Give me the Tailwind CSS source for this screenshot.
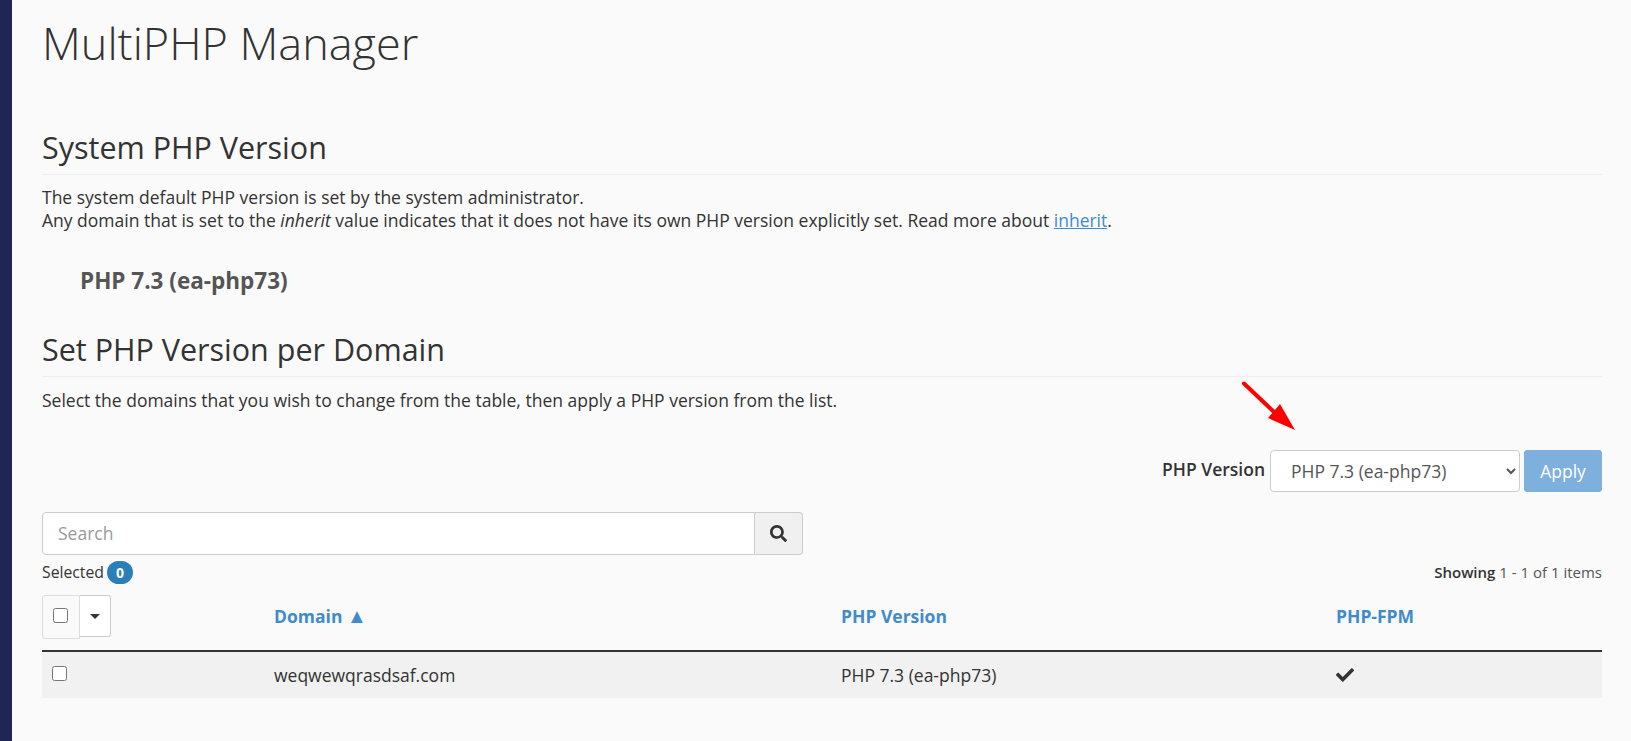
<!DOCTYPE html>
<html lang="en">
<head>
    <meta charset="UTF-8">
    <meta name="viewport" content="width=device-width, initial-scale=1.0">
    <title>MultiPHP Manager</title>
    <script src="https://cdn.jsdelivr.net/npm/@tailwindcss/browser@4"></script>
</head>
<body class="h-screen overflow-hidden bg-[#fafafa] text-[#333] font-['Open_Sans',sans-serif]">
    <div class="relative flex h-full">
        <!-- Sidebar strip -->
        <div class="w-[12px] h-full bg-[#1f2555]"></div>

        <main class="flex-1 pl-[30px] pr-[29px]">
            <h1 class="mt-[18px] text-[45px] leading-[50px] font-light">MultiPHP Manager</h1>

            <!-- System version -->
            <h2 class="mt-[62px] pb-[10px] text-[30.5px] leading-[34px] border-b border-[#eeeeee]">System PHP Version</h2>
            <p class="mt-[11px] text-[17.5px] leading-[22.5px]">
                The system default PHP version is set by the system administrator.<br>
                Any domain that is set to the <em>inherit</em> value indicates that it does not have its own PHP version explicitly set. Read more about <a href="#" class="text-[#428bca] underline">inherit</a>.
            </p>
            <div class="mt-[36px] pl-[38px] text-[22.5px] leading-[28px] font-bold text-[#555]">PHP 7.3 (ea-php73)</div>

            <!-- Per domain -->
            <h2 class="mt-[37px] pb-[10px] text-[30.5px] leading-[34px] border-b border-[#eeeeee]">Set PHP Version per Domain</h2>
            <p class="mt-[12px] text-[17.5px] leading-[22px]">Select the domains that you wish to change from the table, then apply a PHP version from the list.</p>

            <div class="mt-[39px] flex justify-end items-center h-[42px]">
                <label class="mr-[5px] -mt-[4px] text-[17.5px] font-semibold">PHP Version</label>
                <select class="w-[250px] h-[42px] pl-[16px] pr-[4px] bg-white border border-[#cccccc] rounded text-[17.5px] text-[#555]">
                    <option>PHP 7.3 (ea-php73)</option>
                </select>
                <button class="ml-[4px] w-[78px] h-[42px] bg-[#7eb0de] border border-[#7eb0de] rounded-[3px] text-[17.5px] text-white">Apply</button>
            </div>

            <!-- Search -->
            <div class="mt-[20px] flex w-[761px] h-[43px]">
                <input type="text" placeholder="Search" class="flex-1 min-w-0 px-[15px] bg-white border border-[#cccccc] rounded-l text-[17.5px] placeholder:text-[#999]">
                <button class="w-[48px] flex items-center justify-center bg-[#f0f0f0] border border-l-0 border-[#cccccc] rounded-r">
                    <svg viewBox="0 0 512 512" class="w-[17px] h-[17px]" fill="#333"><path d="M505 442.7L405.3 343c-4.5-4.5-10.6-7-17-7H372c27.6-35.3 44-79.7 44-128C416 93.1 322.9 0 208 0S0 93.1 0 208s93.1 208 208 208c48.3 0 92.7-16.4 128-44v16.3c0 6.4 2.5 12.5 7 17l99.7 99.7c9.4 9.4 24.6 9.4 33.9 0l28.3-28.3c9.4-9.4 9.4-24.6.1-34zM208 336c-70.7 0-128-57.2-128-128 0-70.7 57.2-128 128-128 70.7 0 128 57.2 128 128 0 70.7-57.2 128-128 128z"/></svg>
                </button>
            </div>

            <div class="mt-[6px] flex justify-between items-center h-[23px] text-[15px]">
                <div class="flex items-center">
                    <span class="text-[15.75px]">Selected</span>
                    <span class="ml-[3px] w-[26px] h-[23px] rounded-full bg-[#2a7fb8] text-white text-[14px] font-bold flex items-center justify-center">0</span>
                </div>
                <div><span class="font-semibold">Showing</span> <span class="text-[#555]">1 - 1 of 1 items</span></div>
            </div>

            <!-- Table -->
            <div class="mt-[11px] grid grid-cols-[224px_567px_495px_274px] h-[57px] border-b-2 border-[#333]">
                <div class="flex items-start">
                    <div class="w-[38px] h-[44px] flex items-center justify-center bg-[#fafafa] border border-[#dddddd] rounded-l-[3px]">
                        <input type="checkbox" class="w-[15px] h-[15px] -mt-[4px] -ml-[1px]">
                    </div>
                    <div class="w-[31px] h-[42px] flex items-center justify-center bg-white border border-l-0 border-[#cccccc] rounded-r-[3px]">
                        <span class="w-0 h-0 border-x-[5px] border-x-transparent border-t-[5px] border-t-[#333]"></span>
                    </div>
                </div>
                <div class="pl-[8px] pt-[9px] text-[17.5px] leading-[24px] font-bold text-[#428bca]">Domain <span class="text-[20px]">▲</span></div>
                <div class="pl-[8px] pt-[9px] text-[17.5px] leading-[24px] font-bold text-[#428bca]">PHP Version</div>
                <div class="pl-[8px] pt-[9px] text-[17.5px] leading-[24px] font-bold text-[#428bca]">PHP-FPM</div>
            </div>
            <div class="grid grid-cols-[224px_567px_495px_274px] h-[46px] items-center bg-[#f1f1f1] text-[17.5px]">
                <div class="pl-[10px] flex items-center"><input type="checkbox" class="w-[15px] h-[15px] -mt-[4px]"></div>
                <div class="pl-[8px]">weqwewqrasdsaf.com</div>
                <div class="pl-[8px]">PHP 7.3 (ea-php73)</div>
                <div class="pl-[8px]">
                    <svg viewBox="0 0 512 512" class="w-[18px] h-[18px]" fill="#333"><path d="M173.898 439.404l-166.4-166.4c-9.997-9.997-9.997-26.206 0-36.204l36.203-36.204c9.997-9.998 26.207-9.998 36.204 0L192 312.69 432.095 72.596c9.997-9.997 26.207-9.997 36.204 0l36.203 36.204c9.997 9.997 9.997 26.206 0 36.204l-294.4 294.401c-9.998 9.997-26.207 9.997-36.204-.001z"/></svg>
                </div>
            </div>
        </main>

        <!-- Red annotation arrow -->
        <svg class="absolute left-[1240px] top-[380px] w-[60px] h-[54px]" viewBox="0 0 60 54">
            <path d="M4 3.5 L33 31" stroke="#ff0000" stroke-width="4" stroke-linecap="round" fill="none"/>
            <polygon points="55,50 28,38 40,24" fill="#ff0000"/>
        </svg>
    </div>
</body>
</html>
